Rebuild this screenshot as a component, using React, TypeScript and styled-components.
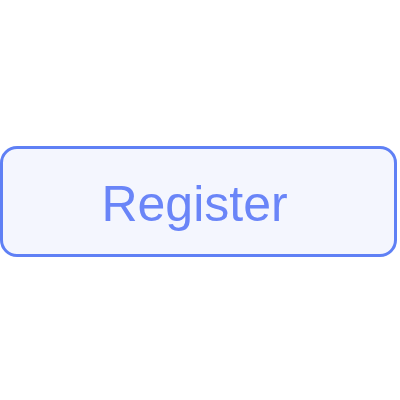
import React from "react";
import styled, { createGlobalStyle } from "styled-components";

const Global = createGlobalStyle`
  html, body { margin: 0; padding: 0; background: #ffffff; }
  #root { width: 400px; height: 400px; }
`;

const Page = styled.div`
  width: 400px;
  height: 400px;
  display: flex;
  align-items: flex-start;
  padding-top: 146px;
  box-sizing: border-box;
`;

const Button = styled.button`
  width: 397px;
  height: 111px;
  box-sizing: border-box;
  border: 3px solid #5f80f5;
  border-radius: 17px;
  background: #f4f6fe;
  color: #6a85f8;
  font-family: "Liberation Sans", Arial, sans-serif;
  font-size: 50px;
  padding: 4px 8px 0 0;
  display: flex;
  align-items: center;
  justify-content: center;
  cursor: pointer;
`;

export default function App() {
  return (
    <>
      <Global />
      <Page>
        <Button>Register</Button>
      </Page>
    </>
  );
}
